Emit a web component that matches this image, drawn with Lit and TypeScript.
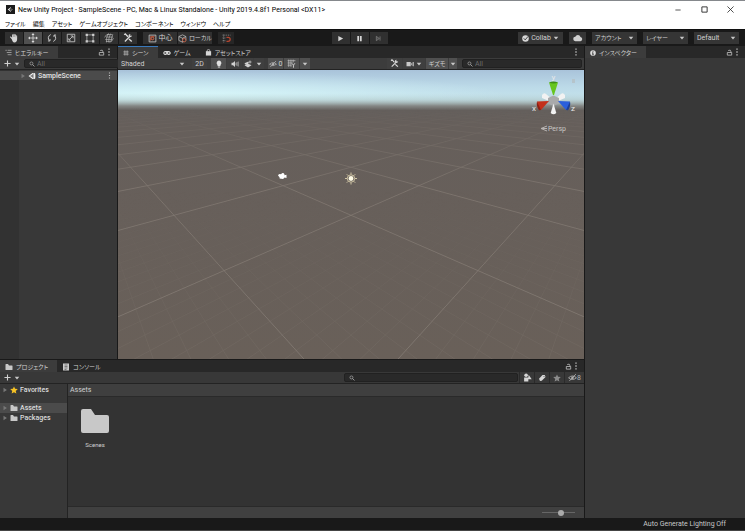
import { LitElement, html, svg, css } from "lit";
import { customElement, property } from "lit/decorators.js";

const ICONS: Record<string, unknown> = {
  logo: svg`<rect width="16" height="16" fill="#1b1b1b"/><path d="M3 8 9 3.500 8.600 6 12.500 8 8.600 10 9 12.500Z" fill="#eee"/><path d="M7 8h5M7 8 9.500 4.500M7 8l2.500 3.500" stroke="#1b1b1b" stroke-width="1.300"/>`,
  unity: svg`<path d="M1 8 9 2h5l1 5-1 1 1 1-1 5H9Z" fill="#eee"/><path d="M5 8h7M7.500 8l4-5M7.500 8l4 5" stroke="#444" stroke-width="1.500"/>`,
  hand: svg`<path d="M4.200 9.500 2 7.200c-.8-1 .6-2 1.400-1.200L5 7.400V3c0-1.200 1.600-1.200 1.700 0v3.500h.4V2c0-1.300 1.700-1.300 1.800 0v4.500h.4V2.700c0-1.200 1.600-1.200 1.700 0v4.200h.4V4.500c0-1.100 1.500-1.100 1.600 0V10c0 3-1.500 5-4.300 5S5.800 13 4.200 9.500Z" fill="#d6d6d6"/>`,
  move: svg`<path d="M8 2v12M2 8h12" stroke="#ddd" stroke-width="1.200"/><path d="M8 0l2.400 3.200H5.600ZM8 16l2.400-3.200H5.600ZM0 8l3.200-2.400v4.800ZM16 8l-3.200-2.400v4.800Z" fill="#ddd"/>`,
  rotate: svg`<g fill="none" stroke="#c4c4c4" stroke-width="1.600"><path d="M6 2.500A6 6 0 0 0 4 12.500M10 13.500A6 6 0 0 0 12 3.500"/><path d="M1.500 12.700h3.300V9.500M14.500 3.300h-3.300v3.200"/></g>`,
  scale: svg`<g fill="none" stroke="#c4c4c4" stroke-width="1.400"><path d="M2 2h12v12H2Z"/><path d="M5 11l6-6M7.500 4.700h3.800v3.800"/><path d="M4.500 8.500v3h3"/></g>`,
  rect: svg`<path d="M3 3h10v10H3Z" fill="none" stroke="#bbb" stroke-width="1.200"/><path d="M1 1h3.600v3.600H1ZM11.400 1H15v3.600h-3.600ZM1 11.400h3.600V15H1ZM11.400 11.400H15V15h-3.600Z" fill="#cdcdcd"/>`,
  transform: svg`<g fill="none" stroke="#b4b4b4" stroke-width="1.100"><path d="M5 2.500h8M3.500 6.500h11M2 10.500h11M3 13.500h7M7 1Q3 7 4 15M10.500 1Q7 8 7.500 15M14 2Q12 8 11 14M1 7Q3 2 8 1.500M15 8q-1 5-6 7"/></g>`,
  tools: svg`<path d="M3 13.500 12 4.500" stroke="#ddd" stroke-width="2"/><path d="M14.500 3.500a3.300 3.300 0 0 1-4.300 3L9 5.500a3.300 3.300 0 0 1 3.200-4l-1.500 2 1.700 1.500Z" fill="#ddd"/><path d="m2 3 1.500-1.500L8 6M9.500 9.500l4.500 4" stroke="#ddd" stroke-width="2.200"/>`,
  pivot: svg`<path d="M2 2h12v12H2Z" fill="none" stroke="#c4c4c4" stroke-width="1.500"/><path d="M4.500 12V4.500H12" fill="none" stroke="#c55a40" stroke-width="1.300"/><circle cx="8" cy="8" r="2.300" fill="none" stroke="#e06a4a" stroke-width="1.700"/>`,
  cube: svg`<path d="M1.500 4.500 8 1.500l6 3v7l-6 3-6.500-3ZM1.500 4.500 8 7.500l6-3M8 7.500v7" fill="none" stroke="#c4c4c4" stroke-width="1.300"/><circle cx="11" cy="11" r="3" fill="#2c2c2c" stroke="#d4664a" stroke-width="1.500"/>`,
  snap: svg`<path d="M1 2h14M1 7h5M1 12h5M3 1v14" stroke="#999" stroke-width="1.300" stroke-dasharray="1.800 1.400"/><path d="M8 6h3a3.500 3.500 0 0 1 0 7H8" fill="none" stroke="#b5452f" stroke-width="2.200"/>`,
  play: svg`<path d="M3 2 14 8 3 14Z" fill="#d6d6d6"/>`,
  pause: svg`<path d="M3 2h4v12H3ZM9 2h4v12H9Z" fill="#d6d6d6"/>`,
  step: svg`<path d="M3 3v10l7-5ZM11.500 3v10" fill="#4a4a4a" stroke="#868686" stroke-width="1.500"/>`,
  check: svg`<circle cx="8" cy="8" r="7.500" fill="#d6d6d6"/><path d="m4 7.500 3.300 3.700L14 3" fill="none" stroke="#333" stroke-width="2"/>`,
  cloud: svg`<path d="M4 13a3.500 3.500 0 0 1-.3-7A4.500 4.500 0 0 1 12 6.300 3.400 3.400 0 0 1 12 13Z" fill="#d0d0d0"/>`,
  list: svg`<path d="M1 3h3M6 3h9M4 8h11M6 13h9" stroke="#bbb" stroke-width="1.600"/>`,
  hash: svg`<path d="M5 1v14M11 1v14M1 5h14M1 11h14" stroke="#c4c4c4" stroke-width="1.800"/>`,
  game: svg`<path d="M4.500 4h7a4 4 0 1 1-2.700 7H7.200A4 4 0 1 1 4.500 4Z" fill="#d6d6d6"/><path d="M4.500 6v4M2.500 8h4" stroke="#282828" stroke-width="1.200"/><circle cx="11.500" cy="8" r="1.500" fill="#282828"/>`,
  bag: svg`<path d="M2 5h12v10H2Z" fill="#d6d6d6"/><path d="M5 7V4a3 3 0 0 1 6 0v3" fill="none" stroke="#d6d6d6" stroke-width="1.600"/>`,
  info: svg`<circle cx="8" cy="8" r="7.500" fill="#ddd"/><path d="M8 3v2.500M6.500 7H8v5.500M6 12.500h4" stroke="#333" stroke-width="2"/>`,
  folder: svg`<path d="M1 3q0-1 1-1h4l2 3h6q1 0 1 1v7q0 1-1 1H2q-1 0-1-1Z" fill="#c8c8c8"/>`,
  console: svg`<path d="M2 1h12v14H2Z" fill="#ccc"/><path d="M5 4h6M5 7h6M5 10h6M5 13h4" stroke="#444" stroke-width="1.200"/>`,
  lock: svg`<path d="M3 8h10v6H3Z" fill="none" stroke="#c4c4c4" stroke-width="1.800"/><path d="M5 3.500Q11 1 11 5v3" fill="none" stroke="#c4c4c4" stroke-width="1.800"/>`,
  dots: svg`<path d="M6.700 1h2.600v2.600H6.700ZM6.700 6.700h2.600v2.600H6.700ZM6.700 12.400h2.600V15H6.700Z" fill="#c4c4c4"/>`,
  plus: svg`<path d="M8 1v14M1 8h14" stroke="#d0d0d0" stroke-width="2.500"/>`,
  caret: svg`<path d="M2 4.500h12L8 12Z" fill="#c8c8c8"/>`,
  fold: svg`<path d="M4 2v12l9-6Z" fill="#777"/>`,
  search: svg`<circle cx="6.500" cy="6.500" r="4" fill="none" stroke="#b0b0b0" stroke-width="1.800"/><path d="m9.500 9.500 5 5" stroke="#b0b0b0" stroke-width="2.200"/>`,
  bulb: svg`<path d="M8 1a5 5 0 0 1 3 8.800V12H5V9.800A5 5 0 0 1 8 1ZM5.700 13h4.600v2H5.700Z" fill="#e0e0e0"/>`,
  sound: svg`<path d="M1 5.500h3L8 2v12l-4-3.500H1Z" fill="#d0d0d0"/><path d="M10 5.500v5M12 4v8M14.500 3v10" stroke="#d0d0d0" stroke-width="1.200"/>`,
  layers: svg`<path d="M1 10.500 8 7l7 3.500L8 15ZM2 6l6-2.500 2 1-2 2 2 1.500-3 2-6-2Z" fill="#d0d0d0"/><path d="M12 1v6M9 4h6" stroke="#d0d0d0" stroke-width="1.500"/>`,
  eye: svg`<path d="M1 8.500Q8 2 15 8.500 8 14.500 1 8.500Z" fill="none" stroke="#b4b4b4" stroke-width="1.500"/><circle cx="8" cy="8.300" r="2.200" fill="#b4b4b4"/><path d="M2.500 14 14 2" stroke="#b4b4b4" stroke-width="1.500"/>`,
  grid: svg`<path d="M1 3h14M1 7h9M1 11h7M3 1v13M7 1v13M11 1v5" stroke="#c4c4c4" stroke-width="1.200"/><path d="m9 8 2.500 3L14 7.500M11.500 11v4.500" fill="none" stroke="#ddd" stroke-width="1.500"/>`,
  camera: svg`<path d="M1 4h8.500v8.500H1ZM10.500 7 13 4v8.500l-2.500-3ZM14 4h1.500v8.500H14Z" fill="#c8c8c8"/>`,
  shapes: svg`<circle cx="5.500" cy="4" r="3.200" fill="#d6d6d6"/><path d="M10 3l5.500 8H9ZM2 8h7.500v7H2Z" fill="#d6d6d6"/>`,
  tag: svg`<path d="M2 9.500 9 2h4.500L15 6l-7.500 7.500-3.500.5Z" fill="#d6d6d6"/><circle cx="12" cy="5" r="1" fill="#444"/>`,
  star: svg`<path d="m8 .8 2.200 4.900 5.300.5-4 3.600 1.200 5.400L8 12.400l-4.700 2.800 1.200-5.400-4-3.600 5.300-.5Z" fill="currentColor"/>`,
  min: svg`<path d="M1 8h14" stroke="#222" stroke-width="2"/>`,
  max: svg`<path d="M2 2h12v12H2Z" fill="none" stroke="#222" stroke-width="2"/>`,
  close: svg`<path d="m1 1 14 14M15 1 1 15" stroke="#222" stroke-width="1.800"/>`,
};

const shared = css`
  :host {
    box-sizing: border-box;
    font-family: Roboto, "Noto Sans CJK JP", sans-serif;
    font-size: 7px;
    line-height: 10px;
    font-feature-settings: "palt";
    color: #d0d0d0;
  }
  *, *::before { box-sizing: border-box; }
  button, select, input {
    font: inherit;
    font-feature-settings: inherit;
    color: inherit;
    margin: 0;
    padding: 0;
    border: 0;
    border-radius: 0;
    background: none;
    appearance: none;
  }
  button {
    display: inline-flex;
    align-items: center;
    justify-content: center;
    gap: 2px;
    white-space: nowrap;
  }
  .kana { font-size: 6px; }
  .spacer { flex: 1; }
  .row { display: flex; align-items: center; }
  .tabs {
    display: flex;
    align-items: stretch;
    height: 12px;
    background: #282828;
    padding-right: 4px;
    font-size: 6px;
  }
  .tab { padding: 0 9px 0 5px; gap: 3px; border-top: 1px solid transparent; }
  .tab.on { background: #3c3c3c; }
  .tab.focus { border-top-color: #3a79bb; }
  .bar {
    display: flex;
    align-items: stretch;
    height: 12px;
    background: #3c3c3c;
    border-bottom: 1px solid #232323;
  }
  .drop { position: relative; display: flex; align-items: center; }
  .drop select { width: 100%; height: 100%; padding: 0 12px 0 3px; }
  .drop ui-icon { position: absolute; right: 3px; pointer-events: none; }
  .search {
    display: flex;
    align-items: center;
    gap: 2px;
    height: 9px;
    padding: 0 4px;
    background: #292929;
    border: 1px solid #212121;
    border-radius: 2px;
    align-self: center;
  }
  .search input { flex: 1; min-width: 0; height: 7px; line-height: 7px; outline: 0; }
  .search input::placeholder { color: #6c6c6c; opacity: 1; }
`;

@customElement("ui-icon")
class UiIcon extends LitElement {
  @property() name = "";
  @property({ type: Number }) size = 7;
  static styles = css`
    :host { display: inline-flex; flex: none; }
    svg { display: block; }
  `;
  render() {
    return html`<svg width=${this.size} height=${this.size} viewBox="0 0 16 16" aria-hidden="true">${ICONS[this.name]}</svg>`;
  }
}

const icon = (name: string, size = 7) => html`<ui-icon name=${name} size=${size}></ui-icon>`;
const search = (label: string, placeholder = "") => html`
  <label class="search">${icon("search", 6)}<input type="text" aria-label=${label} placeholder=${placeholder}></label>`;
const drop = (label: string, value: string, cls = "") => html`
  <label class="drop ${cls}"><select aria-label=${label}><option>${value}</option></select>${icon("caret", 6)}</label>`;
const corner = () => html`
  <button aria-label="ロック">${icon("lock")}</button><button aria-label="メニュー">${icon("dots", 8)}</button>`;

@customElement("window-header")
class WindowHeader extends LitElement {
  static styles = [shared, css`
    :host {
      display: block;
      background: #fff;
      color: #111;
      border-top: 1px solid #85888c;
    }
    .title { height: 17px; padding: 0 8px 0 6px; gap: 3px; color: #000; white-space: nowrap; }
    .controls { gap: 12px; }
    .controls button { width: 14px; height: 14px; }
    nav { display: flex; gap: 7px; height: 11px; padding: 0 5px; font-size: 6px; }
    nav button { height: 11px; color: #000; }
  `];
  render() {
    return html`
      <div class="row title">
        ${icon("logo", 9)}<span>New Unity Project - SampleScene - PC, Mac &amp; Linux Standalone - Unity 2019.4.8f1 Personal &lt;DX11&gt;</span>
        <span class="spacer"></span>
        <div class="row controls">
          <button aria-label="最小化">${icon("min", 6)}</button>
          <button aria-label="最大化">${icon("max", 7)}</button>
          <button aria-label="閉じる">${icon("close", 7)}</button>
        </div>
      </div>
      <nav>${["ファイル", "編集", "アセット", "ゲームオブジェクト", "コンポーネント", "ウィンドウ", "ヘルプ"].map((t) => html`<button>${t}</button>`)}</nav>`;
  }
}

@customElement("main-toolbar")
class MainToolbar extends LitElement {
  static styles = [shared, css`
    :host {
      display: flex;
      align-items: center;
      height: 17px;
      padding: 0 6px 0 5px;
      background: #191919;
      border-top: 1px solid #101010;
    }
    .group { display: flex; gap: 1px; height: 12px; }
    .group button { background: #303030; width: 18px; }
    .group .on { background: #505050; }
    .group.pivot { margin: 0 6px; }
    .group.pivot button { width: 34px; }
    .group.snap button { width: 16px; background: #262626; }
    .before { flex: 3; }
    .after { flex: 4; }
    .right { display: flex; gap: 6px; height: 12px; }
    .right > * { background: #353535; }
    .collab { width: 45px; }
    .cloud { width: 17px; }
    .drop { width: 45px; }
  `];
  render() {
    const tools = ["hand", "move", "rotate", "scale", "rect", "transform", "tools"];
    return html`
      <div class="group">${tools.map((n) => html`<button class=${n === "move" ? "on" : ""} aria-label=${n}>${icon(n, 10)}</button>`)}</div>
      <div class="group pivot"><button>${icon("pivot", 9)}中心</button><button class="kana">${icon("cube", 9)}ローカル</button></div>
      <div class="group snap"><button aria-label="snap">${icon("snap", 9)}</button></div>
      <span class="before"></span>
      <div class="group">${["play", "pause", "step"].map((n) => html`<button aria-label=${n}>${icon(n, 7)}</button>`)}</div>
      <span class="after"></span>
      <div class="right">
        <button class="collab">${icon("check", 7)}Collab ${icon("caret", 6)}</button>
        <button class="cloud" aria-label="cloud">${icon("cloud", 10)}</button>
        ${drop("アカウント", "アカウント", "kana")}${drop("レイヤー", "レイヤー", "kana")}${drop("レイアウト", "Default")}
      </div>`;
  }
}

@customElement("hierarchy-panel")
class HierarchyPanel extends LitElement {
  static styles = [shared, css`
    :host { display: flex; flex-direction: column; background: #383838; }
    .add { padding: 0 4px; gap: 3px; }
    .search { flex: 1; margin-right: 2px; }
    .body { flex: 1; padding-top: 1px; background: linear-gradient(90deg, #323232 19px, #383838 19px); }
    .scene {
      height: 9px;
      padding: 0 4px 0 20px;
      gap: 2px;
      background: #4b4b4b;
      color: #e4e4e4;
      font-weight: 500;
    }
  `];
  render() {
    return html`
      <div class="tabs">
        <button class="tab on">${icon("list")}ヒエラルキー</button><span class="spacer"></span>${corner()}
      </div>
      <div class="bar"><button class="add" aria-label="作成">${icon("plus")}${icon("caret", 6)}</button>${search("ヒエラルキーを検索", "All")}</div>
      <div class="body">
        <div class="row scene">${icon("fold", 6)}${icon("unity", 8)}<span>SampleScene</span><span class="spacer"></span>${icon("dots", 7)}</div>
      </div>`;
  }
}

const HORIZON = 18;
const project = (i: number, j: number) => {
  const depth = 1.65 + (i + j) / 2;
  return [233 + (146 * (i - j)) / depth, HORIZON + 210 / depth];
};

function floorLines(step: number, count: number, far: number) {
  const lines = [];
  for (let n = -count; n <= count; n++) {
    const k = n * step;
    const near = 2 * (0.5 - 1.65) - k;
    const end = 2 * (far - 1.65) - k;
    const [ax, ay] = project(k, near);
    const [bx, by] = project(k, end);
    lines.push(svg`<path d="M${ax} ${ay}L${bx} ${by}M${466 - ax} ${ay}L${466 - bx} ${by}"/>`);
  }
  return lines;
}

@customElement("scene-view")
class SceneView extends LitElement {
  static styles = css`
    :host { display: block; min-height: 0; overflow: hidden; position: relative; }
    .floor { display: block; width: 100%; height: 100%; }
    .gizmo { position: absolute; top: 4px; right: 4px; width: 52px; height: 62px; }
    text { font-family: Roboto, sans-serif; fill: #e8e8e8; }
  `;
  render() {
    return html`
      <svg class="floor" viewBox="0 0 466 290" preserveAspectRatio="xMidYMin slice" role="img" aria-label="シーン">
        <defs>
          <linearGradient id="sky" x2="0" y2="1">
            <stop offset="0" stop-color="#a9c3da"/><stop offset=".4" stop-color="#bcdae8"/><stop offset="1" stop-color="#cdecf0"/>
          </linearGradient>
          <radialGradient id="bright" gradientUnits="userSpaceOnUse" cx="0" cy="0" r="1" gradientTransform="translate(60 27) scale(330 26)">
            <stop offset="0" stop-color="#e0ffff" stop-opacity=".8"/><stop offset="1" stop-color="#e0ffff" stop-opacity="0"/>
          </radialGradient>
          <linearGradient id="ground" gradientUnits="userSpaceOnUse" x1="0" x2="0" y1="23" y2="290">
            <stop offset="0" stop-color="#b8d0d2" stop-opacity="0"/><stop offset=".025" stop-color="#a9bcbc" stop-opacity=".45"/>
            <stop offset=".048" stop-color="#858886"/><stop offset=".065" stop-color="#645f5c"/><stop offset=".12" stop-color="#665f5b"/><stop offset="1" stop-color="#696059"/>
          </linearGradient>
          <linearGradient id="far" gradientUnits="userSpaceOnUse" x1="0" x2="0" y1="38" y2="120"><stop offset="0" stop-color="#fff" stop-opacity="0"/><stop offset=".5" stop-color="#fff" stop-opacity=".5"/><stop offset="1" stop-color="#fff"/></linearGradient>
          <linearGradient id="near" gradientUnits="userSpaceOnUse" x1="0" x2="0" y1="120" y2="290"><stop offset="0" stop-color="#fff" stop-opacity="0"/><stop offset="1" stop-color="#fff"/></linearGradient>
          <mask id="fade-far" maskUnits="userSpaceOnUse" x="0" y="0" width="466" height="290"><rect width="466" height="290" fill="url(#far)"/></mask>
          <mask id="fade-near" maskUnits="userSpaceOnUse" x="0" y="0" width="466" height="290"><rect width="466" height="290" fill="url(#near)"/></mask>
        </defs>
        <rect width="466" height="42" fill="url(#sky)"/>
        <rect width="466" height="42" fill="url(#bright)"/>
        <rect y="23" width="466" height="267" fill="url(#ground)"/>
        <g mask="url(#fade-far)"><g fill="none" stroke="#8a817a" stroke-width=".8" opacity=".75">${floorLines(1, 16, 11)}</g></g>
        <g mask="url(#fade-near)"><g fill="none" stroke="#8a817a" stroke-width=".7" opacity=".3">${floorLines(0.1, 40, 3)}</g></g>
        <path d="M160 105.500q1-2 3-1.200 2-2.500 3.500 0l-.2 1 2.200-.5v3.200l-2-.5q-.5 1.800-3 1.300-2.500.2-2-1.600Z" fill="#fff"/>
        <g stroke="#cfc4a4" stroke-width="1" fill="none"><circle cx="233" cy="108.500" r="3.700"/><path d="M233 102.500v2M233 112.500v2M227 108.500h2M237 108.500h2M228.800 104.300l1.300 1.300M235.900 111.400l1.300 1.300M237.200 104.300l-1.300 1.300M230.100 111.400l-1.300 1.300"/></g>
        <circle cx="233" cy="108.500" r="2.400" fill="#fffbe6"/>
      </svg>
      <svg class="gizmo" viewBox="0 0 52 62" role="img" aria-label="Persp">
        <path d="M14 21q2-3 4-1l6 5-3 2-7-3ZM37 21q-2-3-4-1l-6 5 3 2 7-3Z" fill="#f2f2f2"/>
        <path d="m20 24 5.500-2.500L31 24v5.500L25.500 32 20 29.500Z" fill="#a9aaab"/>
        <path d="M25.500 29.500 22.700 39q2.800 2.400 5.600 0Z" fill="#f2f2f2"/>
        <path d="M21 8.500h9L26 21h-1Z" fill="#66c51f"/><path d="M21 8.500q4.500-2 9 0-4.500 2-9 0Z" fill="#3f8f16"/>
        <path d="m9 27.500 12-.5-8 9q-3-1.500-4-8.500Z" fill="#c3301b"/><path d="M9 27.500 13 36l-2 .2q-3-4-2-8.700Z" fill="#8b2013"/>
        <path d="m42 27.500-12-.5 8 9q3-1.500 4-8.500Z" fill="#2b5fdc"/><path d="m42 27.500-4 8.500 2 .2q3-4 2-8.700Z" fill="#1c3f99"/>
        <path d="M44 5h3v4h-3Z" fill="#b5c4cb"/>
        <text x="25.500" y="6" font-size="8" text-anchor="middle">y</text><text x="4" y="37" font-size="8">x</text><text x="43" y="37" font-size="8">z</text>
        <path d="m19 52-6 2.500 6 2.500M19 54.500h-6" fill="none" stroke="#b8b4b2"/>
        <text x="20" y="57" font-size="7" fill-opacity=".75">Persp</text>
      </svg>`;
  }
}

@customElement("scene-panel")
class ScenePanel extends LitElement {
  static styles = [shared, css`
    :host { display: flex; flex-direction: column; background: #383838; min-width: 0; }
    scene-view { flex: 1; }
    .bar { gap: 1px; }
    .shade { width: 70px; }
    .bar button { width: 15px; background: #3f3f3f; }
    .bar .on { background: #505050; }
    .bar .slim { width: 10px; }
    .bar .thin { width: 8px; }
    .bar .wide { width: 22px; }
    .gap { width: 2px; }
    .search { width: 120px; margin: 0 2px 0 4px; }
  `];
  render() {
    return html`
      <div class="tabs">
        <button class="tab on focus">${icon("hash", 6)}シーン</button>
        <button class="tab">${icon("game", 8)}ゲーム</button>
        <button class="tab">${icon("bag")}アセットストア</button>
        <span class="spacer"></span><button aria-label="メニュー">${icon("dots", 8)}</button>
      </div>
      <div class="bar">
        ${drop("描画モード", "Shaded", "shade")}<span class="gap"></span>
        <button>2D</button><span class="gap"></span>
        <button class="on" aria-label="ライト">${icon("bulb", 8)}</button>
        <button aria-label="音声">${icon("sound", 8)}</button>
        <button class="slim" aria-label="エフェクト">${icon("layers", 8)}</button>
        <button class="slim" aria-label="エフェクト一覧">${icon("caret", 6)}</button><span class="gap"></span>
        <button class="on" aria-label="非表示">${icon("eye", 8)}0</button>
        <button class="on" aria-label="グリッド">${icon("grid", 9)}</button>
        <button class="on slim" aria-label="グリッド設定">${icon("caret", 6)}</button>
        <span class="spacer"></span>
        <button aria-label="ツール">${icon("tools", 9)}</button>
        <button class="wide" aria-label="カメラ">${icon("camera", 8)}${icon("caret", 6)}</button>
        <button class="on wide kana">ギズモ</button>
        <button class="on thin" aria-label="ギズモ一覧">${icon("caret", 6)}</button>
        ${search("シーンを検索", "All")}
      </div>
      <scene-view></scene-view>`;
  }
}

@customElement("project-panel")
class ProjectPanel extends LitElement {
  static styles = [shared, css`
    :host { display: flex; flex-direction: column; background: #383838; min-width: 0; }
    .bar { background: #383838; }
    .add { padding: 0 4px; gap: 3px; }
    .search { width: 174px; margin-right: 1px; }
    .bar .filter { width: 15px; border-left: 1px solid #2a2a2a; color: #8c8c8c; gap: 0; }
    .bar .count { width: 20px; color: #b4b4b4; }
    .split { flex: 1; display: grid; grid-template-columns: 68px 1fr; min-height: 0; }
    .tree { padding-top: 1px; border-right: 1px solid #232323; font-weight: 500; color: #dcdcdc; }
    .node { height: 10px; padding-left: 2px; gap: 2px; }
    .node.fav { margin-bottom: 8px; }
    .node.on { background: #4b4b4b; }
    .gold { color: #f7c325; }
    .files { display: flex; flex-direction: column; background: #333; }
    .path { height: 13px; padding-left: 2px; background: #3f3f3f; border-bottom: 1px solid #2a2a2a; }
    .items { flex: 1; padding: 8px; }
    .item { flex-direction: column; width: 38px; gap: 3px; font-size: 6px; }
    .zoom { height: 12px; background: #404040; border-top: 1px solid #2a2a2a; display: flex; align-items: center; justify-content: flex-end; padding-right: 9px; }
    .zoom input { width: 33px; height: 8px; background: linear-gradient(#666, #666) center / 100% 1px no-repeat; }
    .zoom input::-webkit-slider-thumb { appearance: none; width: 6px; height: 6px; border-radius: 50%; background: #aaa; }
  `];
  render() {
    return html`
      <div class="tabs">
        <button class="tab on">${icon("folder", 8)}プロジェクト</button>
        <button class="tab">${icon("console", 8)}コンソール</button>
        <span class="spacer"></span>${corner()}
      </div>
      <div class="bar">
        <button class="add" aria-label="作成">${icon("plus")}${icon("caret", 6)}</button><span class="spacer"></span>
        ${search("プロジェクトを検索")}
        <button class="filter" aria-label="種類">${icon("shapes", 9)}</button>
        <button class="filter" aria-label="ラベル">${icon("tag", 8)}</button>
        <button class="filter" aria-label="お気に入り">${icon("star", 8)}</button>
        <button class="filter count" aria-label="非表示">${icon("eye", 9)}8</button>
      </div>
      <div class="split">
        <div class="tree">
          <div class="row node fav">${icon("fold", 6)}<span class="row gold">${icon("star", 8)}</span>Favorites</div>
          <div class="row node on">${icon("fold", 6)}${icon("folder", 8)}Assets</div>
          <div class="row node">${icon("fold", 6)}${icon("folder", 8)}Packages</div>
        </div>
        <div class="files">
          <div class="row path">Assets</div>
          <div class="items"><button class="item">${icon("folder", 32)}Scenes</button></div>
          <div class="zoom"><input type="range" aria-label="アイコンサイズ" min="0" max="100" value="60"></div>
        </div>
      </div>`;
  }
}

@customElement("inspector-panel")
class InspectorPanel extends LitElement {
  static styles = [shared, css`:host { display: block; background: #383838; }`];
  render() {
    return html`<div class="tabs"><button class="tab on">${icon("info", 6)}インスペクター</button><span class="spacer"></span>${corner()}</div>`;
  }
}

@customElement("app-root")
class AppRoot extends LitElement {
  static styles = [shared, css`
    :host { display: flex; flex-direction: column; height: 100vh; background: #191919; overflow: hidden; }
    .work {
      flex: 1;
      min-height: 0;
      display: grid;
      grid-template: "tree scene side" minmax(0, 1fr) "project project side" 158px / 117px minmax(0, 1fr) 160px;
      gap: 1px;
    }
    hierarchy-panel { grid-area: tree; }
    scene-panel { grid-area: scene; }
    project-panel { grid-area: project; }
    inspector-panel { grid-area: side; }
    footer { height: 13px; padding-right: 19px; text-align: right; color: #c8c8c8; line-height: 13px; border-bottom: 1px solid #444; }
  `];
  render() {
    return html`
      <window-header></window-header>
      <main-toolbar></main-toolbar>
      <div class="work">
        <hierarchy-panel></hierarchy-panel>
        <scene-panel></scene-panel>
        <project-panel></project-panel>
        <inspector-panel></inspector-panel>
      </div>
      <footer>Auto Generate Lighting Off</footer>`;
  }
}
